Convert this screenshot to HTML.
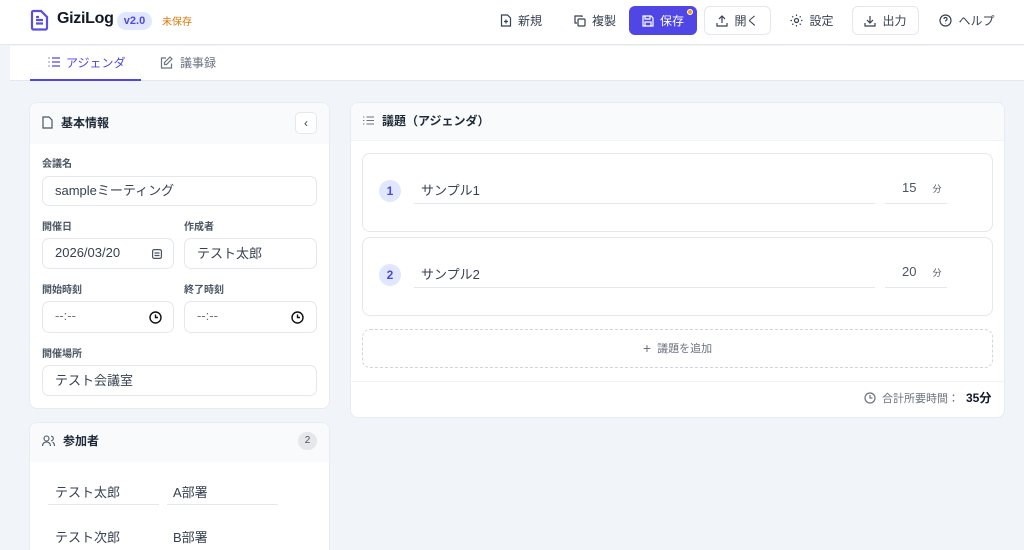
<!DOCTYPE html>
<html><head><meta charset="utf-8"><style>
*{box-sizing:border-box;margin:0;padding:0}
html,body{width:1024px;height:550px;overflow:hidden}
body{background:#f1f4f9;font-family:"Liberation Sans","Noto Sans CJK JP",sans-serif;color:#1f2937;position:relative}
.a{position:absolute}
.hdr{left:0;top:0;width:1024px;height:45px;background:#fff;border-bottom:1px solid #e5e7eb}
.nav{left:10px;top:46px;width:1014px;height:35px;background:#fff;border-bottom:1px solid #e5e7eb}
.btn{position:absolute;top:6px;height:29px;border-radius:6px;font-size:12px;color:#374151;display:flex;align-items:center;justify-content:center;gap:6px}
.bd{border:1px solid #e5e7eb;background:#fff}
.card{position:absolute;background:#fff;border:1px solid #e8ebf0;border-radius:8px;overflow:hidden}
.ch{position:absolute;left:0;top:0;right:0;background:#f8fafc;font-size:12px;font-weight:bold;display:flex;align-items:center;padding-left:12px;gap:8px}
.lbl{position:absolute;font-size:10px;font-weight:bold;color:#4b5563}
.inp{position:absolute;border:1px solid #e5e7eb;border-radius:7px;background:#fff;font-size:13px;color:#374151;display:flex;align-items:center;padding-left:12px;padding-bottom:3px}
.ul{position:absolute;border-bottom:1px solid #e5e7eb;font-size:13px;color:#374151}
svg{display:block}
</style></head><body>
<div class="a hdr"></div>
<svg class="a" style="left:30px;top:9px" width="19" height="22" viewBox="0 0 19 22" fill="none" stroke="#5b4fe0" stroke-width="2.2"><path d="M3 2h8l6 6v11a1.5 1.5 0 0 1-1.5 1.5h-12A1.5 1.5 0 0 1 2 19V3.5A1.5 1.5 0 0 1 3 2z"/><path d="M6 11h7M6 14.5h7M6 8h3"/></svg>
<div class="a" style="left:57px;top:10px;font-size:16px;font-weight:bold;color:#111827;letter-spacing:-0.3px">GiziLog</div>
<div class="a" style="left:117px;top:12px;width:35px;height:18px;border-radius:9px;background:#e0e7ff;color:#4f46e5;font-size:11px;font-weight:bold;text-align:center;line-height:18px">v2.0</div>
<div class="a" style="left:162px;top:13px;font-size:10px;color:#d97706">未保存</div>

<div class="btn" style="left:488px;width:66px"><svg width="12" height="13" viewBox="0 0 12 13" fill="none" stroke="#374151" stroke-width="1.2"><path d="M1.5 1h6l3 3v8h-9z"/><path d="M6 5.5v4M4 7.5h4"/></svg>新規</div>
<div class="btn" style="left:562px;width:66px"><svg width="12" height="12" viewBox="0 0 12 12" fill="none" stroke="#374151" stroke-width="1.2"><rect x="4" y="4" width="7" height="7" rx="1"/><path d="M8 2V1H1v7h2"/></svg>複製</div>
<div class="btn" style="left:629px;width:68px;background:#4f46e5;color:#fff"><svg width="12" height="12" viewBox="0 0 12 12" fill="none" stroke="#fff" stroke-width="1.2"><path d="M1 1h8l2 2v8H1z"/><path d="M3 1v3h5V1M3 11V7h6v4"/></svg>保存</div>
<div class="a" style="left:687px;top:9px;width:6px;height:6px;border-radius:50%;background:#f59e0b;border:1px solid #fff"></div>
<div class="btn bd" style="left:704px;width:67px"><svg width="12" height="12" viewBox="0 0 12 12" fill="none" stroke="#374151" stroke-width="1.2"><path d="M6 8V1M3 4l3-3 3 3M1 8v3h10V8"/></svg>開く</div>
<div class="btn" style="left:782px;width:60px"><svg width="13" height="13" viewBox="0 0 13 13" fill="none" stroke="#374151" stroke-width="1.2"><circle cx="6.5" cy="6.5" r="2"/><path d="M6.5 0.5v1.5M6.5 11v1.5M0.5 6.5h1.5M11 6.5h1.5M2.3 2.3l1 1M9.7 9.7l1 1M2.3 10.7l1-1M9.7 3.3l1-1"/></svg>設定</div>
<div class="btn bd" style="left:852px;width:67px"><svg width="12" height="12" viewBox="0 0 12 12" fill="none" stroke="#374151" stroke-width="1.2"><path d="M6 1v7M3 5l3 3 3-3M1 8v3h10V8"/></svg>出力</div>
<div class="btn" style="left:932px;width:70px"><svg width="13" height="13" viewBox="0 0 13 13" fill="none" stroke="#374151" stroke-width="1.2"><circle cx="6.5" cy="6.5" r="5.5"/><path d="M5 5a1.5 1.5 0 1 1 2 1.4c-.5.2-.5.6-.5 1.1M6.5 9.3v.3"/></svg>ヘルプ</div>

<div class="a nav"></div>
<div class="a" style="left:30px;top:79px;width:111px;height:2px;background:#4f46e5"></div>
<svg class="a" style="left:48px;top:57px" width="12" height="10" viewBox="0 0 12 10" fill="none" stroke="#4f46e5" stroke-width="1.2"><path d="M4 1h8M4 5h8M4 9h8M0.5 1h1M0.5 5h1M0.5 9h1"/></svg>
<div class="a" style="left:66px;top:54px;font-size:12px;color:#4f46e5">アジェンダ</div>
<svg class="a" style="left:160px;top:56px" width="13" height="13" viewBox="0 0 13 13" fill="none" stroke="#6b7280" stroke-width="1.2"><path d="M6 2H1.5v10h10V7.5"/><path d="M10 1l2 2-5.5 5.5H4.5v-2z"/></svg>
<div class="a" style="left:180px;top:54px;font-size:12px;color:#6b7280">議事録</div>

<div class="card" style="left:29px;top:102px;width:301px;height:307px">
<div class="ch" style="height:41px;padding-bottom:3px"><svg width="11" height="13" viewBox="0 0 11 13" fill="none" stroke="#4b5563" stroke-width="1.2"><path d="M1 1h6l3 3v8H1z"/></svg>基本情報</div>
<div class="a bd" style="left:265px;top:9px;width:22px;height:22px;border-radius:5px;font-size:12px;text-align:center;line-height:20px;color:#374151">‹</div>
</div>
<div class="lbl" style="left:42px;top:155px">会議名</div>
<div class="inp" style="left:42px;top:176px;width:275px;height:30px">sampleミーティング</div>
<div class="lbl" style="left:42px;top:218px">開催日</div>
<div class="inp" style="left:42px;top:238px;width:132px;height:31px">2026/03/20<svg class="a" style="left:109px;top:10px" width="10" height="10" viewBox="0 0 10 10" fill="none" stroke="#4b5563" stroke-width="1.2"><rect x="0.6" y="0.6" width="8.8" height="8.8" rx="1.5"/><path d="M2.5 4h5M2.5 6.5h5"/></svg></div>
<div class="lbl" style="left:184px;top:218px">作成者</div>
<div class="inp" style="left:184px;top:238px;width:133px;height:31px">テスト太郎</div>
<div class="lbl" style="left:42px;top:281px">開始時刻</div>
<div class="inp" style="left:42px;top:301px;width:132px;height:32px;color:#6b7280">--:--<svg class="a" style="left:106px;top:9px" width="13" height="13" viewBox="0 0 13 13" fill="none" stroke="#111" stroke-width="1.4"><circle cx="6.5" cy="6.5" r="5.5"/><path d="M6.5 3.5v3h2.5"/></svg></div>
<div class="lbl" style="left:184px;top:281px">終了時刻</div>
<div class="inp" style="left:184px;top:301px;width:133px;height:32px;color:#6b7280">--:--<svg class="a" style="left:106px;top:9px" width="13" height="13" viewBox="0 0 13 13" fill="none" stroke="#111" stroke-width="1.4"><circle cx="6.5" cy="6.5" r="5.5"/><path d="M6.5 3.5v3h2.5"/></svg></div>
<div class="lbl" style="left:42px;top:345px">開催場所</div>
<div class="inp" style="left:42px;top:365px;width:275px;height:31px">テスト会議室</div>

<div class="card" style="left:29px;top:422px;width:301px;height:140px">
<div class="ch" style="height:39px;padding-bottom:4px"><svg width="13" height="12" viewBox="0 0 13 12" fill="none" stroke="#4b5563" stroke-width="1.1"><circle cx="4.5" cy="3.5" r="2.5"/><path d="M0.5 11c0-2.5 1.8-4 4-4s4 1.5 4 4M9 1.2a2.3 2.3 0 0 1 0 4.6M10.5 7.3c1.2.5 2 1.8 2 3.7"/></svg>参加者</div>
<div class="a" style="left:268px;top:9px;width:19px;height:18px;border-radius:9px;background:#e5e7eb;font-size:10px;color:#4b5563;text-align:center;line-height:18px">2</div>
</div>
<div class="ul" style="left:48px;top:482px;width:111px;height:23px;padding-left:7px">テスト太郎</div>
<div class="ul" style="left:167px;top:482px;width:111px;height:23px;padding-left:6px">A部署</div>
<div class="a" style="left:55px;top:527px;font-size:13px;color:#374151">テスト次郎</div>
<div class="a" style="left:173px;top:527px;font-size:13px;color:#374151">B部署</div>

<div class="card" style="left:350px;top:102px;width:655px;height:316px">
<div class="ch" style="height:38px;border-bottom:1px solid #f1f3f6;padding-bottom:3px"><svg width="11" height="9" viewBox="0 0 11 9" fill="none" stroke="#6b7280" stroke-width="1.1"><path d="M3.5 1h7.5M3.5 4.5h7.5M3.5 8h7.5M0 1h1.3M0 4.5h1.3M0 8h1.3"/></svg>議題（アジェンダ）</div>
<div class="a" style="left:0;right:0;top:278px;border-top:1px solid #f1f3f6"></div>
</div>
<div class="a" style="left:362px;top:153px;width:631px;height:79px;border:1px solid #e5e7eb;border-radius:8px;background:#fff"></div>
<div class="a" style="left:379px;top:180px;width:22px;height:22px;border-radius:50%;background:#e0e7ff;color:#4f46e5;font-size:12px;font-weight:bold;text-align:center;line-height:22px">1</div>
<div class="ul" style="left:414px;top:180px;width:461px;height:24px;padding-left:7px">サンプル1</div>
<div class="ul" style="left:885px;top:180px;width:62px;height:24px;padding-left:17px;color:#4b5563">15<span style="font-size:9px;margin-left:16px">分</span></div>
<div class="a" style="left:362px;top:237px;width:631px;height:79px;border:1px solid #e5e7eb;border-radius:8px;background:#fff"></div>
<div class="a" style="left:379px;top:264px;width:22px;height:22px;border-radius:50%;background:#e0e7ff;color:#4f46e5;font-size:12px;font-weight:bold;text-align:center;line-height:22px">2</div>
<div class="ul" style="left:414px;top:264px;width:461px;height:24px;padding-left:7px">サンプル2</div>
<div class="ul" style="left:885px;top:264px;width:62px;height:24px;padding-left:17px;color:#4b5563">20<span style="font-size:9px;margin-left:16px">分</span></div>
<div class="a" style="left:362px;top:329px;width:631px;height:39px;border:1px dashed #d1d5db;border-radius:8px;font-size:11px;color:#6b7280;text-align:center;line-height:37px"><span style="font-size:14px;vertical-align:-1px;margin-right:6px">+</span>議題を追加</div>
<svg class="a" style="left:864px;top:392px" width="12" height="12" viewBox="0 0 12 12" fill="none" stroke="#6b7280" stroke-width="1.2"><circle cx="6" cy="6" r="5"/><path d="M6 3v3h2.5"/></svg>
<div class="a" style="left:882px;top:390px;font-size:11px;color:#6b7280">合計所要時間：</div>
<div class="a" style="left:966px;top:389px;font-size:12px;font-weight:bold;color:#111827">35分</div>
</body></html>
